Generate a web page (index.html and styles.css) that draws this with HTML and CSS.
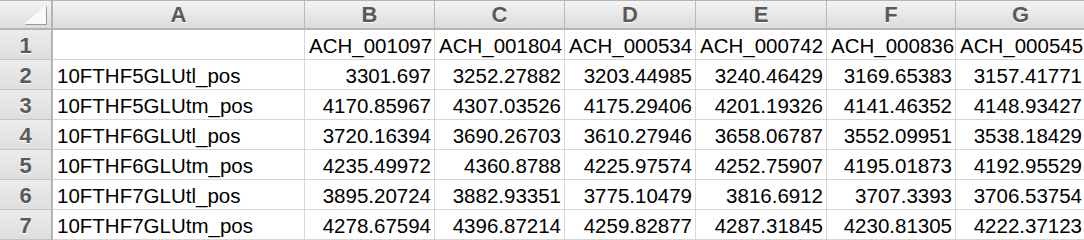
FILE: index.html
```html
<!DOCTYPE html>
<html>
<head>
<meta charset="utf-8">
<link rel="stylesheet" href="styles.css">
</head>
<body>
<div class="sheet">
  <div class="hd corner"><span class="tri"></span></div>
  <div class="hd col">A</div>
  <div class="hd col">B</div>
  <div class="hd col">C</div>
  <div class="hd col">D</div>
  <div class="hd col">E</div>
  <div class="hd col">F</div>
  <div class="hd col">G</div>

  <div class="hd row">1</div>
  <div class="c"></div>
  <div class="c">ACH_001097</div>
  <div class="c">ACH_001804</div>
  <div class="c">ACH_000534</div>
  <div class="c">ACH_000742</div>
  <div class="c">ACH_000836</div>
  <div class="c">ACH_000545</div>

  <div class="hd row">2</div>
  <div class="c">10FTHF5GLUtl_pos</div>
  <div class="c n">3301.697</div>
  <div class="c n">3252.27882</div>
  <div class="c n">3203.44985</div>
  <div class="c n">3240.46429</div>
  <div class="c n">3169.65383</div>
  <div class="c n">3157.41771</div>

  <div class="hd row">3</div>
  <div class="c">10FTHF5GLUtm_pos</div>
  <div class="c n">4170.85967</div>
  <div class="c n">4307.03526</div>
  <div class="c n">4175.29406</div>
  <div class="c n">4201.19326</div>
  <div class="c n">4141.46352</div>
  <div class="c n">4148.93427</div>

  <div class="hd row">4</div>
  <div class="c">10FTHF6GLUtl_pos</div>
  <div class="c n">3720.16394</div>
  <div class="c n">3690.26703</div>
  <div class="c n">3610.27946</div>
  <div class="c n">3658.06787</div>
  <div class="c n">3552.09951</div>
  <div class="c n">3538.18429</div>

  <div class="hd row">5</div>
  <div class="c">10FTHF6GLUtm_pos</div>
  <div class="c n">4235.49972</div>
  <div class="c n">4360.8788</div>
  <div class="c n">4225.97574</div>
  <div class="c n">4252.75907</div>
  <div class="c n">4195.01873</div>
  <div class="c n">4192.95529</div>

  <div class="hd row">6</div>
  <div class="c">10FTHF7GLUtl_pos</div>
  <div class="c n">3895.20724</div>
  <div class="c n">3882.93351</div>
  <div class="c n">3775.10479</div>
  <div class="c n">3816.6912</div>
  <div class="c n">3707.3393</div>
  <div class="c n">3706.53754</div>

  <div class="hd row">7</div>
  <div class="c">10FTHF7GLUtm_pos</div>
  <div class="c n">4278.67594</div>
  <div class="c n">4396.87214</div>
  <div class="c n">4259.82877</div>
  <div class="c n">4287.31845</div>
  <div class="c n">4230.81305</div>
  <div class="c n">4222.37123</div>
</div>
</body>
</html>
```

FILE: styles.css
```css
html, body {
  margin: 0;
  padding: 0;
  background: #ffffff;
}

.sheet {
  display: grid;
  grid-template-columns: 53px 252px 130px 130px 131px 131px 129px 130px;
  grid-template-rows: 29px repeat(7, 30px);
  width: 1086px;
  border-top: 1px solid #b4b4b4;
  font-family: "Liberation Sans", Arial, sans-serif;
}

.hd {
  box-sizing: border-box;
  border-right: 1px solid #b9b9b9;
  border-bottom: 1px solid #b9b9b9;
  color: #5a5a5a;
  font-weight: bold;
  font-size: 22px;
  text-shadow: 0 1px 0 #ffffff;
  display: flex;
  align-items: center;
  justify-content: center;
}

.col, .corner {
  background: linear-gradient(#f3f3f3, #dcdcdc);
  border-bottom: 2px solid #b4b4b4;
  padding-top: 1px;
}

.row {
  background: linear-gradient(#ececec, #dedede);
  border-right: 2px solid #b4b4b4;
  border-bottom: 1px solid #c4c4c4;
  padding-top: 2px;
}

.corner {
  position: relative;
  border-right: 2px solid #b4b4b4;
}

.tri {
  position: absolute;
  right: 5px;
  bottom: 4px;
  width: 0;
  height: 0;
  border-left: 22px solid transparent;
  border-bottom: 19px solid #f9f9f9;
  filter: drop-shadow(1px 1px 0 #9a9a9a);
}

.c {
  box-sizing: border-box;
  border-right: 1px solid #d6d6d6;
  border-bottom: 1px solid #d6d6d6;
  font-size: 20.5px;
  color: #000000;
  padding: 2px 3px 0 4px;
  display: flex;
  align-items: center;
  white-space: nowrap;
  overflow: hidden;
}

.n {
  justify-content: flex-end;
  padding-right: 3px;
}
```
